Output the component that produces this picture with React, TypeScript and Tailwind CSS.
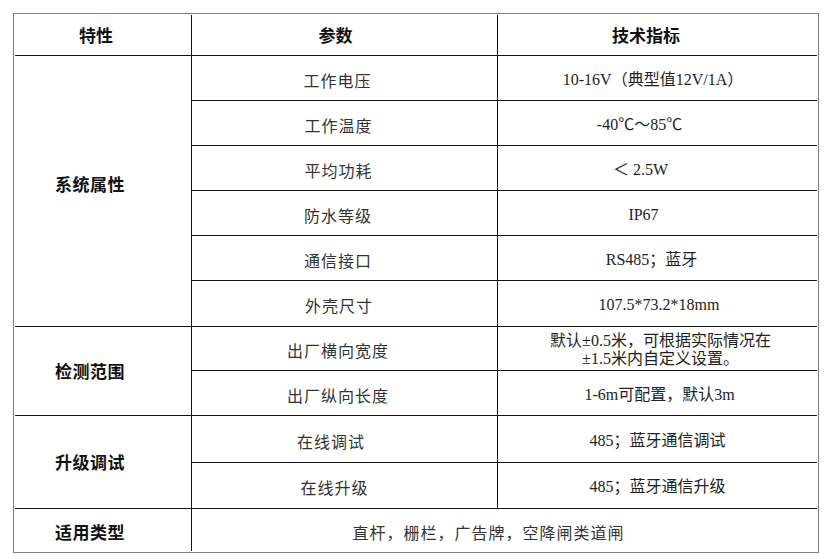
import React from "react";

const SANS = "font-['Noto_Sans_CJK_SC',sans-serif]";
const SERIF = "font-['Liberation_Serif','Noto_Sans_CJK_SC',serif]";

type Row = { label: string; value: string; lp?: string; vp?: string };

const Head = ({ children, cls }: { children: React.ReactNode; cls: string }) => (
  <div className={`flex items-center justify-center ${SANS} text-[17px] font-bold text-[#111] ${cls}`}>
    {children}
  </div>
);

const Group = ({ children, cls }: { children: React.ReactNode; cls: string }) => (
  <div
    className={`flex items-center justify-start pl-[40px] ${SANS} text-[17px] font-bold text-[#111] tracking-[0.5px] border-r border-b border-[#111] ${cls}`}
  >
    {children}
  </div>
);

const Label = ({ children, cls }: { children: React.ReactNode; cls: string }) => (
  <div
    className={`flex items-center justify-center ${SANS} text-[16px] tracking-[1px] text-[#333] border-r border-b border-[#111] pt-[3px] ${cls}`}
  >
    {children}
  </div>
);

const Value = ({ children, cls }: { children: React.ReactNode; cls: string }) => (
  <div
    className={`flex items-center justify-center text-center ${SERIF} text-[16px] leading-[18px] text-[#222] border-b border-[#111] pt-[3px] ${cls}`}
  >
    {children}
  </div>
);

export default function App() {
  return (
    <div className="bg-white w-[833px] h-[559px] pt-[13px] pl-[13px]">
      <div className="w-[806px] border border-[#808080] p-px">
        <div className="grid grid-cols-[177px_306px_319px] grid-rows-[41px_45px_45px_45px_45px_45px_46px_44px_45px_47px_46px_42px]">
          <Head cls="border-r border-b border-[#111] pr-[14px]">特性</Head>
          <Head cls="border-r border-b border-[#111] pr-[18px]">参数</Head>
          <Head cls="border-b border-[#111] pr-[23px]">技术指标</Head>

          <Group cls="row-span-6 pb-[14px]">系统属性</Group>
          <Label cls="pr-[14px]">工作电压</Label>
          <Value cls="pr-[9px]">10-16V（典型值12V/1A）</Value>
          <Label cls="pr-[12px]">工作温度</Label>
          <Value cls="pr-[36px]">-40℃～85℃</Value>
          <Label cls="pr-[12px]">平均功耗</Label>
          <Value cls="pr-[34px]">＜ 2.5W</Value>
          <Label cls="pr-[13px]">防水等级</Label>
          <Value cls="pr-[28px]">IP67</Value>
          <Label cls="pr-[13px]">通信接口</Label>
          <Value cls="pr-[12px]">RS485；蓝牙</Value>
          <Label cls="pr-[11px]">外壳尺寸</Label>
          <Value cls="pl-[3px]">107.5*73.2*18mm</Value>

          <Group cls="row-span-2">检测范围</Group>
          <Label cls="pr-[13px]">出厂横向宽度</Label>
          <Value cls="pl-[6px] pt-0">
            <span>
              默认±0.5米，可根据实际情况在
              <br />
              ±1.5米内自定义设置。
            </span>
          </Value>
          <Label cls="pr-[13px]">出厂纵向长度</Label>
          <Value cls="pl-[4px]">1-6m可配置，默认3m</Value>

          <Group cls="row-span-2">升级调试</Group>
          <Label cls="pr-[27px]">在线调试</Label>
          <Value cls="">485；蓝牙通信调试</Value>
          <Label cls="pr-[20px]">在线升级</Label>
          <Value cls="">485；蓝牙通信升级</Value>

          <div
            className={`flex items-center justify-start pl-[40px] ${SANS} text-[17px] font-bold text-[#111] tracking-[0.5px] border-r border-[#111] pt-[3px]`}
          >
            适用类型
          </div>
          <div
            className={`col-span-2 flex items-center justify-center ${SANS} text-[16px] tracking-[1px] text-[#333] pr-[32px] pt-[3px]`}
          >
            直杆，栅栏，广告牌，空降闸类道闸
          </div>
        </div>
      </div>
    </div>
  );
}
